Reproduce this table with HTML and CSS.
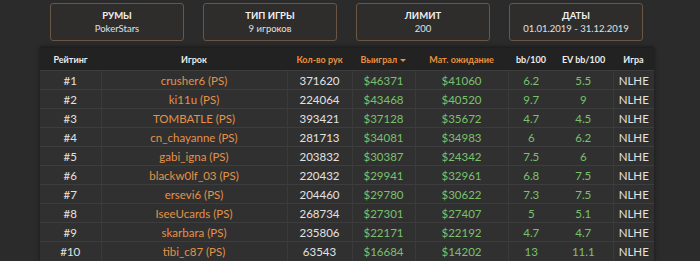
FILE: index.html
```html
<!DOCTYPE html>
<html lang="ru">
<head>
<meta charset="utf-8">
<link rel="stylesheet" href="styles.css">
</head>
<body>
<div class="filters">
  <div class="filter"><div class="f-title">РУМЫ</div><div class="f-val">PokerStars</div></div>
  <div class="filter"><div class="f-title">ТИП ИГРЫ</div><div class="f-val">9 игроков</div></div>
  <div class="filter"><div class="f-title">ЛИМИТ</div><div class="f-val">200</div></div>
  <div class="filter"><div class="f-title">ДАТЫ</div><div class="f-val">01.01.2019 - 31.12.2019</div></div>
</div>
<table class="stats">
  <colgroup>
    <col class="c-rank"><col class="c-player"><col class="c-hands"><col class="c-won"><col class="c-ev"><col class="c-bb"><col class="c-evbb"><col class="c-game">
  </colgroup>
  <thead>
    <tr>
      <th>Рейтинг</th><th>Игрок</th><th class="or">Кол-во рук</th><th class="or">Выиграл <span class="caret"></span></th><th class="or">Мат. ожидание</th><th class="nb">bb/100</th><th>EV bb/100</th><th>Игра</th>
    </tr>
  </thead>
  <tbody>
    <tr><td>#1</td><td class="pl">crusher6 (PS)</td><td>371620</td><td class="g">$46371</td><td class="g">$41060</td><td class="g nb">6.2</td><td class="g">5.5</td><td>NLHE</td></tr>
    <tr><td>#2</td><td class="pl">ki11u (PS)</td><td>224064</td><td class="g">$43468</td><td class="g">$40520</td><td class="g nb">9.7</td><td class="g">9</td><td>NLHE</td></tr>
    <tr><td>#3</td><td class="pl">TOMBATLE (PS)</td><td>393421</td><td class="g">$37128</td><td class="g">$35672</td><td class="g nb">4.7</td><td class="g">4.5</td><td>NLHE</td></tr>
    <tr><td>#4</td><td class="pl">cn_chayanne (PS)</td><td>281713</td><td class="g">$34081</td><td class="g">$34983</td><td class="g nb">6</td><td class="g">6.2</td><td>NLHE</td></tr>
    <tr><td>#5</td><td class="pl">gabi_igna (PS)</td><td>203832</td><td class="g">$30387</td><td class="g">$24342</td><td class="g nb">7.5</td><td class="g">6</td><td>NLHE</td></tr>
    <tr><td>#6</td><td class="pl">blackw0lf_03 (PS)</td><td>220432</td><td class="g">$29941</td><td class="g">$32961</td><td class="g nb">6.8</td><td class="g">7.5</td><td>NLHE</td></tr>
    <tr><td>#7</td><td class="pl">ersevi6 (PS)</td><td>204460</td><td class="g">$29780</td><td class="g">$30622</td><td class="g nb">7.3</td><td class="g">7.5</td><td>NLHE</td></tr>
    <tr><td>#8</td><td class="pl">IseeUcards (PS)</td><td>268734</td><td class="g">$27301</td><td class="g">$27407</td><td class="g nb">5</td><td class="g">5.1</td><td>NLHE</td></tr>
    <tr><td>#9</td><td class="pl">skarbara (PS)</td><td>235806</td><td class="g">$22171</td><td class="g">$22192</td><td class="g nb">4.7</td><td class="g">4.7</td><td>NLHE</td></tr>
    <tr><td>#10</td><td class="pl">tibi_c87 (PS)</td><td>63543</td><td class="g">$16684</td><td class="g">$14202</td><td class="g nb">13</td><td class="g">11.1</td><td>NLHE</td></tr>
  </tbody>
</table>
</body>
</html>
```
FILE: styles.css
```css
html, body {
  margin: 0;
  padding: 0;
  background: #2b2b2b;
  font-family: Lato, "Open Sans", sans-serif;
  color: #e4e4e4;
  overflow: hidden;
}
.filters {
  display: flex;
  gap: 19px;
  padding: 3px 0 0 50px;
  height: 44px;
  box-sizing: border-box;
}
.filter {
  width: 134px;
  height: 38px;
  box-sizing: border-box;
  border: 1px solid #6a5645;
  border-radius: 3px;
  background: #2e2d2c;
  display: flex;
  flex-direction: column;
  align-items: center;
  justify-content: center;
  text-align: center;
  padding-bottom: 1px;
}
.f-title {
  font-size: 9.5px;
  font-weight: 700;
  line-height: 13px;
  color: #f0f0f0;
}
.f-val {
  font-size: 9.5px;
  line-height: 13px;
  color: #e0e0e0;
}
.stats {
  margin: 3px 0 0 40px;
  width: 614px;
  border-collapse: collapse;
  table-layout: fixed;
  background: #303030;
  box-shadow: 0 0 4px rgba(0,0,0,0.5);
  border-top: 1px solid #1e1e1e;
}
.c-rank { width: 61px; }
.c-player { width: 186px; }
.c-hands { width: 65px; }
.c-won { width: 63px; }
.c-ev { width: 93px; }
.c-bb { width: 46px; }
.c-evbb { width: 59px; }
.c-game { width: 41px; }
thead tr {
  background: #222222;
  height: 23px;
}
th {
  font-size: 9px;
  font-weight: 700;
  color: #ececec;
  padding: 0;
  text-align: center;
  white-space: nowrap;
}
th.or { color: #e8913f; }
.caret {
  display: inline-block;
  width: 0;
  height: 0;
  border-left: 3px solid transparent;
  border-right: 3px solid transparent;
  border-top: 3.5px solid #e8913f;
  vertical-align: middle;
  margin-left: 1px;
}
tbody tr {
  height: 19px;
}
td {
  font-size: 11.5px;
  padding: 0;
  text-align: center;
  white-space: nowrap;
  border-top: 1px solid #3d3d3d;
  border-left: 1px solid #3a3a3a;
  color: #e2e2e2;
  line-height: 17px;
}
td:first-child { border-left: none; }
td.nb + td { border-left: none; }
td.pl { color: #e3924a; }
td.g { color: #78c26c; }
```
